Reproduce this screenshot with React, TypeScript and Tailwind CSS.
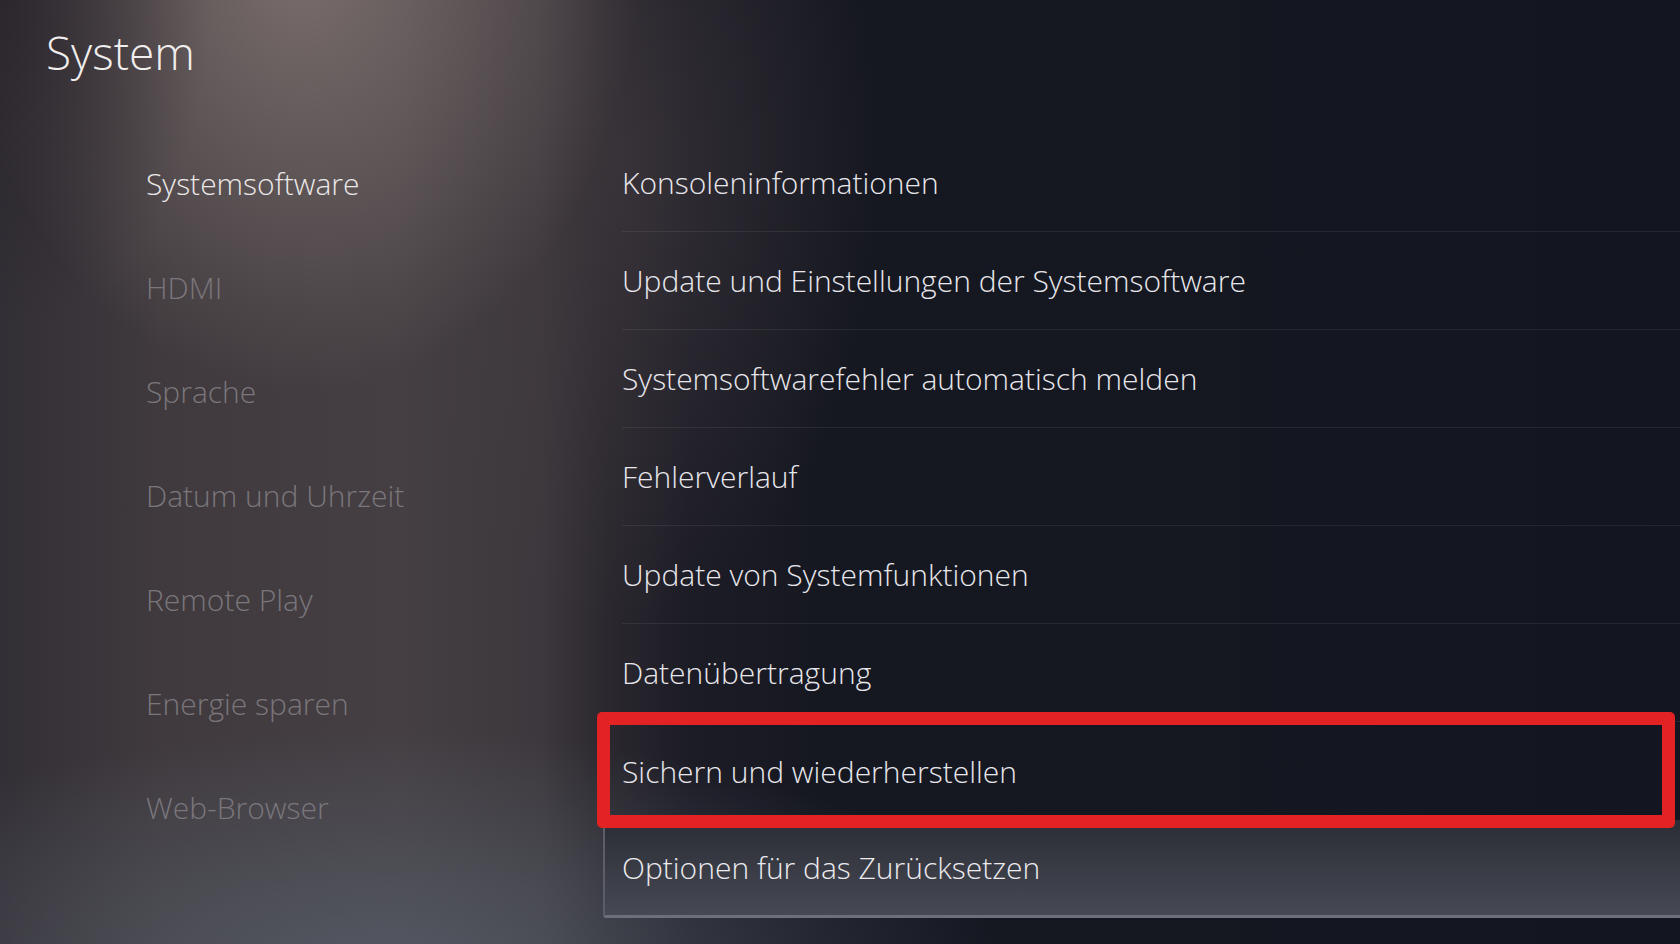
import React from "react";

const leftItems = [
  "Systemsoftware",
  "HDMI",
  "Sprache",
  "Datum und Uhrzeit",
  "Remote Play",
  "Energie sparen",
  "Web-Browser",
];

const rightItems = [
  "Konsoleninformationen",
  "Update und Einstellungen der Systemsoftware",
  "Systemsoftwarefehler automatisch melden",
  "Fehlerverlauf",
  "Update von Systemfunktionen",
  "Datenübertragung",
];

export default function App() {
  return (
    <div className="relative w-[1680px] h-[944px] overflow-hidden font-['Open_Sans','Noto_Sans',sans-serif] bg-[radial-gradient(ellipse_210px_330px_at_0px_0px,rgba(38,34,40,0.75),rgba(38,34,40,0)_100%),radial-gradient(ellipse_340px_430px_at_300px_-40px,rgba(172,154,148,0.52),rgba(172,154,148,0)_100%),radial-gradient(ellipse_260px_460px_at_620px_160px,rgba(70,62,66,0.55),rgba(70,62,66,0)_100%),radial-gradient(ellipse_620px_230px_at_380px_960px,rgba(88,96,108,0.75),rgba(88,96,108,0)_100%),linear-gradient(90deg,#332f36_0px,#403a3e_160px,#453f43_400px,#3d383d_540px,#2a272e_610px,#1c1c26_690px,#161821_820px,#131520_1680px)]">
      <header className="h-[131px] pl-[46px] pt-[29px]">
        <h1 className="text-[46px] leading-none text-[#f1eeee] font-light">System</h1>
      </header>
      <div className="flex">
        <nav className="w-[622px] shrink-0 pl-[146px]">
          {leftItems.map((t, i) => (
            <div
              key={t}
              className={
                i === 0
                  ? "h-[104px] flex items-center text-[30px] font-light text-[#ebe8e8]"
                  : "h-[104px] flex items-center text-[30px] font-light text-[#7a767c]"
              }
            >
              {t}
            </div>
          ))}
        </nav>
        <div className="flex-1 pt-[3px]">
          {rightItems.map((t) => (
            <div
              key={t}
              className="h-[98px] flex items-center border-b border-white/[0.07] text-[30px] font-light text-[#e8e7ec]"
            >
              {t}
            </div>
          ))}
          <div className="relative h-[98px] flex items-center text-[30px] font-light text-[#e8e7ec]">
            Sichern und wiederherstellen
          </div>
          <div className="h-[98px] -ml-[19px] pl-[17px] flex items-center text-[30px] font-light text-[#eceaee] bg-[linear-gradient(to_bottom,#2b2d36,#464953)] border-l-2 border-b-[3px] border-l-[#5b5e67] border-b-[#6d707a] rounded-bl-[3px]">
            Optionen für das Zurücksetzen
          </div>
        </div>
      </div>
      <div className="absolute left-[597px] top-[712px] w-[1078px] h-[116px] border-[13px] border-[#e32323] rounded-[5px]" />
    </div>
  );
}
